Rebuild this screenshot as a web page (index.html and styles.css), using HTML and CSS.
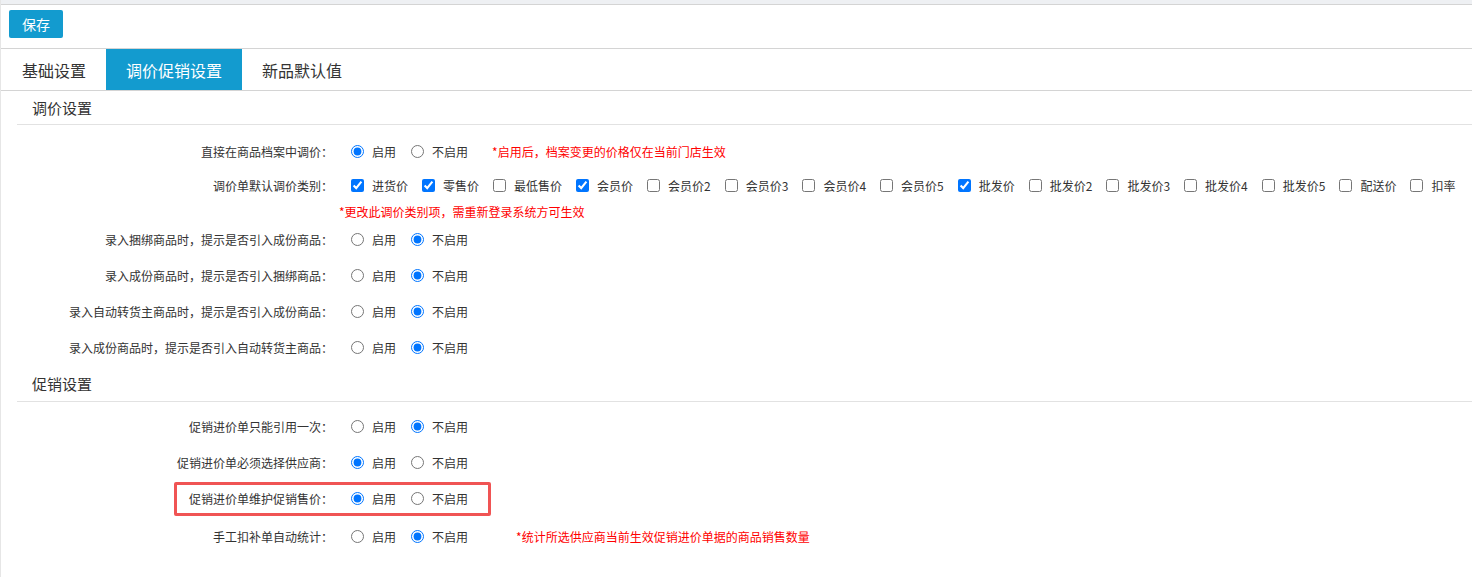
FILE: index.html
```html
<!DOCTYPE html>
<html lang="zh-CN">
<head>
    <meta charset="UTF-8">
    <title>调价促销设置</title>
    <link rel="stylesheet" href="styles.css">
</head>
<body>
<div class="page">
    <div class="top-strip"></div>

    <div class="toolbar">
        <button class="btn-save">保存</button>
    </div>

    <nav class="tabs">
        <a href="#" class="tab">基础设置</a>
        <a href="#" class="tab active">调价促销设置</a>
        <a href="#" class="tab">新品默认值</a>
    </nav>

    <section class="settings-section">
        <h3 class="section-title">调价设置</h3>
        <div class="form first">
            <div class="form-row">
                <label class="form-label">直接在商品档案中调价：</label>
                <div class="form-control">
                    <label class="option"><input type="radio" name="r1" checked>启用</label>
                    <label class="option"><input type="radio" name="r1">不启用</label>
                    <span class="tip">*启用后，档案变更的价格仅在当前门店生效</span>
                </div>
            </div>
            <div class="form-row short">
                <label class="form-label">调价单默认调价类别：</label>
                <div class="form-control checks">
                    <label class="option"><input type="checkbox" checked>进货价</label>
                    <label class="option"><input type="checkbox" checked>零售价</label>
                    <label class="option"><input type="checkbox">最低售价</label>
                    <label class="option"><input type="checkbox" checked>会员价</label>
                    <label class="option"><input type="checkbox">会员价2</label>
                    <label class="option"><input type="checkbox">会员价3</label>
                    <label class="option"><input type="checkbox">会员价4</label>
                    <label class="option"><input type="checkbox">会员价5</label>
                    <label class="option"><input type="checkbox" checked>批发价</label>
                    <label class="option"><input type="checkbox">批发价2</label>
                    <label class="option"><input type="checkbox">批发价3</label>
                    <label class="option"><input type="checkbox">批发价4</label>
                    <label class="option"><input type="checkbox">批发价5</label>
                    <label class="option"><input type="checkbox">配送价</label>
                    <label class="option"><input type="checkbox">扣率</label>
                </div>
            </div>
            <p class="tip-line">*更改此调价类别项，需重新登录系统方可生效</p>
            <div class="form-row">
                <label class="form-label">录入捆绑商品时，提示是否引入成份商品：</label>
                <div class="form-control">
                    <label class="option"><input type="radio" name="r3">启用</label>
                    <label class="option"><input type="radio" name="r3" checked>不启用</label>
                </div>
            </div>
            <div class="form-row">
                <label class="form-label">录入成份商品时，提示是否引入捆绑商品：</label>
                <div class="form-control">
                    <label class="option"><input type="radio" name="r4">启用</label>
                    <label class="option"><input type="radio" name="r4" checked>不启用</label>
                </div>
            </div>
            <div class="form-row">
                <label class="form-label">录入自动转货主商品时，提示是否引入成份商品：</label>
                <div class="form-control">
                    <label class="option"><input type="radio" name="r5">启用</label>
                    <label class="option"><input type="radio" name="r5" checked>不启用</label>
                </div>
            </div>
            <div class="form-row">
                <label class="form-label">录入成份商品时，提示是否引入自动转货主商品：</label>
                <div class="form-control">
                    <label class="option"><input type="radio" name="r6">启用</label>
                    <label class="option"><input type="radio" name="r6" checked>不启用</label>
                </div>
            </div>
        </div>
    </section>

    <section class="settings-section promo">
        <h3 class="section-title">促销设置</h3>
        <div class="form second">
            <div class="form-row">
                <label class="form-label">促销进价单只能引用一次：</label>
                <div class="form-control">
                    <label class="option"><input type="radio" name="p1">启用</label>
                    <label class="option"><input type="radio" name="p1" checked>不启用</label>
                </div>
            </div>
            <div class="form-row">
                <label class="form-label">促销进价单必须选择供应商：</label>
                <div class="form-control">
                    <label class="option"><input type="radio" name="p2" checked>启用</label>
                    <label class="option"><input type="radio" name="p2">不启用</label>
                </div>
            </div>
            <div class="form-row marked">
                <label class="form-label">促销进价单维护促销售价：</label>
                <div class="form-control">
                    <label class="option"><input type="radio" name="p3" checked>启用</label>
                    <label class="option"><input type="radio" name="p3">不启用</label>
                </div>
                <span class="highlight-box"></span>
            </div>
            <div class="form-row last">
                <label class="form-label">手工扣补单自动统计：</label>
                <div class="form-control">
                    <label class="option"><input type="radio" name="p4">启用</label>
                    <label class="option"><input type="radio" name="p4" checked>不启用</label>
                    <span class="tip far">*统计所选供应商当前生效促销进价单据的商品销售数量</span>
                </div>
            </div>
        </div>
    </section>
</div>
</body>
</html>
```

FILE: styles.css
```css
:root {
    --brand-color: #139bcf;
    --line-color: #d4d4d4;
    --text-color: #333333;
    --tip-color: #ff0000;
}

body {
    margin: 0;
    background-color: #ffffff;
    font-family: "Noto Sans CJK SC", "Microsoft YaHei", sans-serif;
    color: var(--text-color);
    font-size: 12px;
}

.page {
    border-left: 1px solid #e6e6e6;
    min-height: 577px;
    box-sizing: border-box;
}

.top-strip {
    height: 4px;
    background-color: #eef0f3;
    border-bottom: 1px solid var(--line-color);
}

/* Toolbar */
.toolbar {
    height: 43px;
    padding: 5px 0 0 8px;
    box-sizing: border-box;
}
.btn-save {
    width: 54px;
    height: 28px;
    border: none;
    border-radius: 2px;
    background-color: var(--brand-color);
    color: #ffffff;
    font-family: inherit;
    font-size: 14px;
    padding: 0;
    cursor: pointer;
}

/* Tabs */
.tabs {
    display: flex;
    padding-left: 1px;
    border-top: 1px solid var(--line-color);
    border-bottom: 1px solid var(--line-color);
    height: 41px;
}
.tab {
    display: flex;
    align-items: center;
    padding: 0 20px;
    font-size: 16px;
    color: var(--text-color);
    text-decoration: none;
}
.tab.active {
    background-color: var(--brand-color);
    color: #ffffff;
}

/* Sections */
.settings-section {
    margin-left: 16px;
}
.settings-section.promo { margin-top: 2px; }
.section-title {
    margin: 0;
    height: 33px;
    line-height: 33px;
    padding-left: 15px;
    font-size: 15px;
    font-weight: normal;
    border-bottom: 1px solid #e2e2e2;
}
.promo .section-title {
    height: 34px;
    line-height: 34px;
}

.form.first { padding-top: 8px; }
.form.second { padding-top: 6px; }

.form-row {
    display: flex;
    align-items: center;
    height: 36px;
    position: relative;
}
.form-row.short { height: 32px; }
.form-row.last { margin-top: 2px; }

.form-label {
    width: 316px;
    text-align: right;
    flex-shrink: 0;
}
.form-control {
    display: flex;
    align-items: center;
    padding-left: 18px;
    white-space: nowrap;
}

.option {
    display: inline-flex;
    align-items: center;
    margin-right: 15px;
}
.option input {
    margin: 0 8px 0 0;
    width: 13px;
    height: 13px;
}
.checks .option { margin-right: 14px; }

.tip {
    color: var(--tip-color);
    margin-left: 9px;
}
.tip.far { margin-left: 33px; }

.tip-line {
    margin: 2px 0 0 322px;
    height: 18px;
    line-height: 18px;
    color: var(--tip-color);
}

/* Annotation box */
.highlight-box {
    position: absolute;
    left: 157px;
    top: 2px;
    width: 317px;
    height: 34px;
    border: 3px solid #f05454;
    border-radius: 2px;
    box-sizing: border-box;
    pointer-events: none;
}
```
